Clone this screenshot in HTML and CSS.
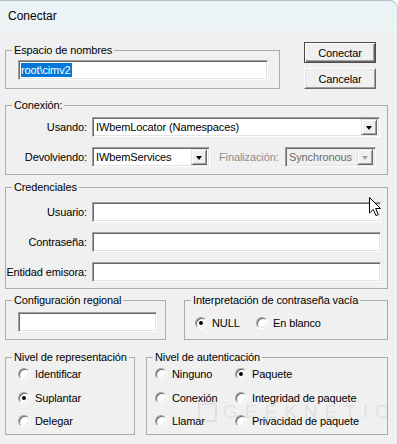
FILE: index.html
```html
<!DOCTYPE html>
<html lang="es">
<head>
<meta charset="utf-8">
<title>Conectar</title>
<link rel="stylesheet" href="styles.css">
</head>
<body>
<div class="window">
  <div class="titlebar">Conectar</div>
  <div class="content">
    <div class="row1">
      <fieldset class="ns">
        <legend>Espacio de nombres</legend>
        <div class="ns-body">
          <div class="tb ns-input"><span class="sel">root\cimv2</span></div>
        </div>
      </fieldset>
      <div class="buttons">
        <button class="btn default">Conectar</button>
        <button class="btn">Cancelar</button>
      </div>
    </div>

    <fieldset class="conn">
      <legend>Conexión:</legend>
      <div class="rows conn-rows">
        <div class="row">
          <div class="lbl">Usando:</div>
          <div class="combo w-using"><span class="val">IWbemLocator (Namespaces)</span><span class="drop"><i class="tri"></i></span></div>
        </div>
        <div class="row">
          <div class="lbl">Devolviendo:</div>
          <div class="combo w-ret"><span class="val">IWbemServices</span><span class="drop"><i class="tri"></i></span></div>
          <div class="fin">Finalización:</div>
          <div class="combo disabled w-sync"><span class="val">Synchronous</span><span class="drop"><i class="tri"></i></span></div>
        </div>
      </div>
    </fieldset>

    <fieldset class="cred">
      <legend>Credenciales</legend>
      <div class="rows cred-rows">
        <div class="row">
          <div class="lbl">Usuario:</div>
          <div class="tb w-cred"></div>
        </div>
        <div class="row">
          <div class="lbl">Contraseña:</div>
          <div class="tb w-cred"></div>
        </div>
        <div class="row">
          <div class="lbl">Entidad emisora:</div>
          <div class="tb w-cred"></div>
        </div>
      </div>
    </fieldset>

    <div class="row3">
      <fieldset class="region">
        <legend>Configuración regional</legend>
        <div class="region-body"><div class="tb w-region"></div></div>
      </fieldset>
      <fieldset class="interp">
        <legend>Interpretación de contraseña vacía</legend>
        <div class="interp-body">
          <div class="opt w-null"><span class="radio checked"></span><span>NULL</span></div>
          <div class="opt"><span class="radio"></span><span>En blanco</span></div>
        </div>
      </fieldset>
    </div>

    <div class="row4">
      <fieldset class="repr">
        <legend>Nivel de representación</legend>
        <div class="repr-body">
          <div class="opt"><span class="radio"></span><span>Identificar</span></div>
          <div class="opt"><span class="radio checked"></span><span>Suplantar</span></div>
          <div class="opt"><span class="radio"></span><span>Delegar</span></div>
        </div>
      </fieldset>
      <fieldset class="auth">
        <legend>Nivel de autenticación</legend>
        <div class="auth-body">
          <div class="opt"><span class="radio"></span><span>Ninguno</span></div>
          <div class="opt"><span class="radio checked"></span><span>Paquete</span></div>
          <div class="opt"><span class="radio"></span><span>Conexión</span></div>
          <div class="opt"><span class="radio"></span><span>Integridad de paquete</span></div>
          <div class="opt"><span class="radio"></span><span>Llamar</span></div>
          <div class="opt"><span class="radio"></span><span>Privacidad de paquete</span></div>
        </div>
      </fieldset>
    </div>
  </div>

  <div class="watermark"><span class="wm-box"></span><span class="wm-text">GEEKNETIC</span></div>

  <svg class="cursor" width="14" height="20" viewBox="0 0 14 20">
    <path d="M0.5 0.5 L0.5 16 L4.2 12.4 L7 18.6 L9.3 17.6 L6.6 11.5 L11.5 11.5 Z" fill="#fff" stroke="#000" stroke-width="1" stroke-linejoin="miter"/>
  </svg>
</div>
</body>
</html>
```

FILE: styles.css
```css
* { box-sizing: border-box; }

html, body {
  margin: 0;
  padding: 0;
  background: #ffffff;
}

body {
  width: 398px;
  height: 444px;
  overflow: hidden;
  font-family: "Liberation Sans", Arial, sans-serif;
  font-size: 11px;
  letter-spacing: -0.12px;
  color: #000;
}

.window {
  position: relative;
  width: 398px;
  height: 444px;
  background: linear-gradient(#e8f3f6 0, #edf3f4 28px, #f0f0f0 36px, #f0f0f0 100%);
  border-top: 1px solid #bdbdbd;
  border-right: 1px solid #c9c9c9;
  border-top-right-radius: 8px;
  overflow: hidden;
}

.titlebar {
  height: 31px;
  padding-left: 8px;
  font-size: 12px;
  letter-spacing: 0;
  line-height: 30px;
}

.content {
  padding-left: 5px;
}

fieldset {
  margin: 0;
  padding: 0;
  min-width: 0;
  border: 1px solid #ababab;
}

legend {
  margin-left: 6px;
  padding: 0 2px;
  height: 13px;
  line-height: 13px;
  font-size: 11px;
}

/* text boxes */
.tb {
  height: 20px;
  background: #fff;
  border: 1px solid;
  border-color: #a0a0a0 #ffffff #ffffff #a0a0a0;
  box-shadow: inset 1px 1px 0 #696969, inset -1px -1px 0 #e3e3e3;
}

/* row 1 */
.row1 {
  display: flex;
  align-items: flex-start;
}

.ns {
  margin-top: 12px;
  width: 275px;
}

.ns-body {
  padding: 3px 0 8px 12px;
}

.ns-input {
  width: 250px;
  padding: 2px 0 0 2px;
}

.sel {
  display: inline-block;
  height: 14px;
  line-height: 14px;
  padding: 0 1px 0 0;
  background: #0078d7;
  color: #fff;
}

.buttons {
  margin-left: 24px;
  margin-top: 10px;
  display: flex;
  flex-direction: column;
  gap: 5px;
}

.btn {
  width: 72px;
  height: 21px;
  padding: 0;
  font-family: inherit;
  font-size: 11px;
  letter-spacing: inherit;
  color: #000;
  background: #f0f0f0;
  border: 1px solid;
  border-color: #ffffff #696969 #696969 #ffffff;
  box-shadow: inset 1px 1px 0 #e3e3e3, inset -1px -1px 0 #a0a0a0;
}

.btn.default {
  border-color: #4a4a4a;
  box-shadow: inset 1px 1px 0 #ffffff, inset -1px -1px 0 #696969, inset -2px -2px 0 #a0a0a0;
}

/* generic rows */
.rows {
  display: flex;
  flex-direction: column;
}

.row {
  display: flex;
  align-items: center;
}

.lbl {
  width: 81px;
  margin-right: 5px;
  display: flex;
  justify-content: flex-end;
  white-space: nowrap;
}

/* conexión */
.conn {
  margin-top: 10px;
  width: 383px;
}

.conn-rows {
  padding: 5px 0 7px 0;
  gap: 10px;
}

.combo {
  display: flex;
  align-items: center;
  height: 20px;
  padding: 2px;
  background: #fff;
  border: 1px solid;
  border-color: #a0a0a0 #ffffff #ffffff #a0a0a0;
  box-shadow: inset 1px 1px 0 #696969, inset -1px -1px 0 #e3e3e3;
}

.combo .val {
  flex: 1;
  min-width: 0;
  padding-left: 1px;
  white-space: nowrap;
  overflow: hidden;
}

.drop {
  flex: none;
  width: 16px;
  height: 16px;
  display: flex;
  align-items: center;
  justify-content: center;
  background: #f0f0f0;
  border: 1px solid;
  border-color: #e3e3e3 #696969 #696969 #e3e3e3;
  box-shadow: inset 1px 1px 0 #ffffff, inset -1px -1px 0 #a0a0a0;
}

.tri {
  width: 0;
  height: 0;
  border-left: 3.5px solid transparent;
  border-right: 3.5px solid transparent;
  border-top: 4px solid #000;
  margin-top: 1px;
}

.w-using { width: 288px; }
.w-ret { width: 118px; }
.w-sync { width: 91px; }

.fin {
  width: 66px;
  margin-left: 9px;
  color: #8d8d8d;
  white-space: nowrap;
}

.combo.disabled {
  background: #f0f0f0;
}

.combo.disabled .val {
  color: #6d6d6d;
}

.combo.disabled .tri {
  border-top-color: #a0a0a0;
}

/* credenciales */
.cred {
  margin-top: 6px;
  width: 383px;
}

.cred-rows {
  padding: 8px 0 6px 0;
  gap: 10px;
}

.w-cred { width: 289px; }

/* row 3 */
.row3 {
  display: flex;
  gap: 18px;
  margin-top: 5px;
}

.region { width: 161px; }

.region-body {
  padding: 5px 0 7px 12px;
}

.w-region { width: 139px; }

.interp { width: 204px; }

.interp-body {
  display: flex;
  padding: 8px 0 8px 10px;
}

.w-null { width: 61px; }

/* radios */
.opt {
  display: flex;
  align-items: center;
  gap: 5px;
  height: 16px;
  white-space: nowrap;
}

.radio {
  position: relative;
  flex: none;
  width: 12px;
  height: 12px;
  border-radius: 50%;
  background: #fff;
  border: 1px solid;
  border-color: #a0a0a0 #ffffff #ffffff #a0a0a0;
  box-shadow: inset 1px 1px 0 #696969, inset -1px -1px 0 #e3e3e3;
}

.radio.checked::after {
  content: "";
  position: absolute;
  left: 3px;
  top: 3px;
  width: 4px;
  height: 4px;
  border-radius: 50%;
  background: #000;
}

/* row 4 */
.row4 {
  display: flex;
  gap: 11px;
  margin-top: 11px;
}

.repr { width: 130px; }

.repr-body {
  display: flex;
  flex-direction: column;
  gap: 7.5px;
  padding: 2px 0 5px 12px;
}

.auth { width: 242px; }

.auth-body {
  display: grid;
  grid-template-columns: 80px auto;
  row-gap: 7.5px;
  padding: 2px 0 5px 8px;
}

/* overlays */
.watermark {
  position: absolute;
  left: 198px;
  top: 400px;
  display: flex;
  align-items: center;
  gap: 6px;
  pointer-events: none;
}

.wm-box {
  width: 19px;
  height: 19px;
  border: 2px solid rgba(120, 120, 120, 0.12);
}

.wm-text {
  font-family: "Liberation Sans", Arial, sans-serif;
  font-size: 19px;
  letter-spacing: 7px;
  color: rgba(120, 120, 120, 0.14);
}

.cursor {
  position: absolute;
  left: 369px;
  top: 196px;
}
```
